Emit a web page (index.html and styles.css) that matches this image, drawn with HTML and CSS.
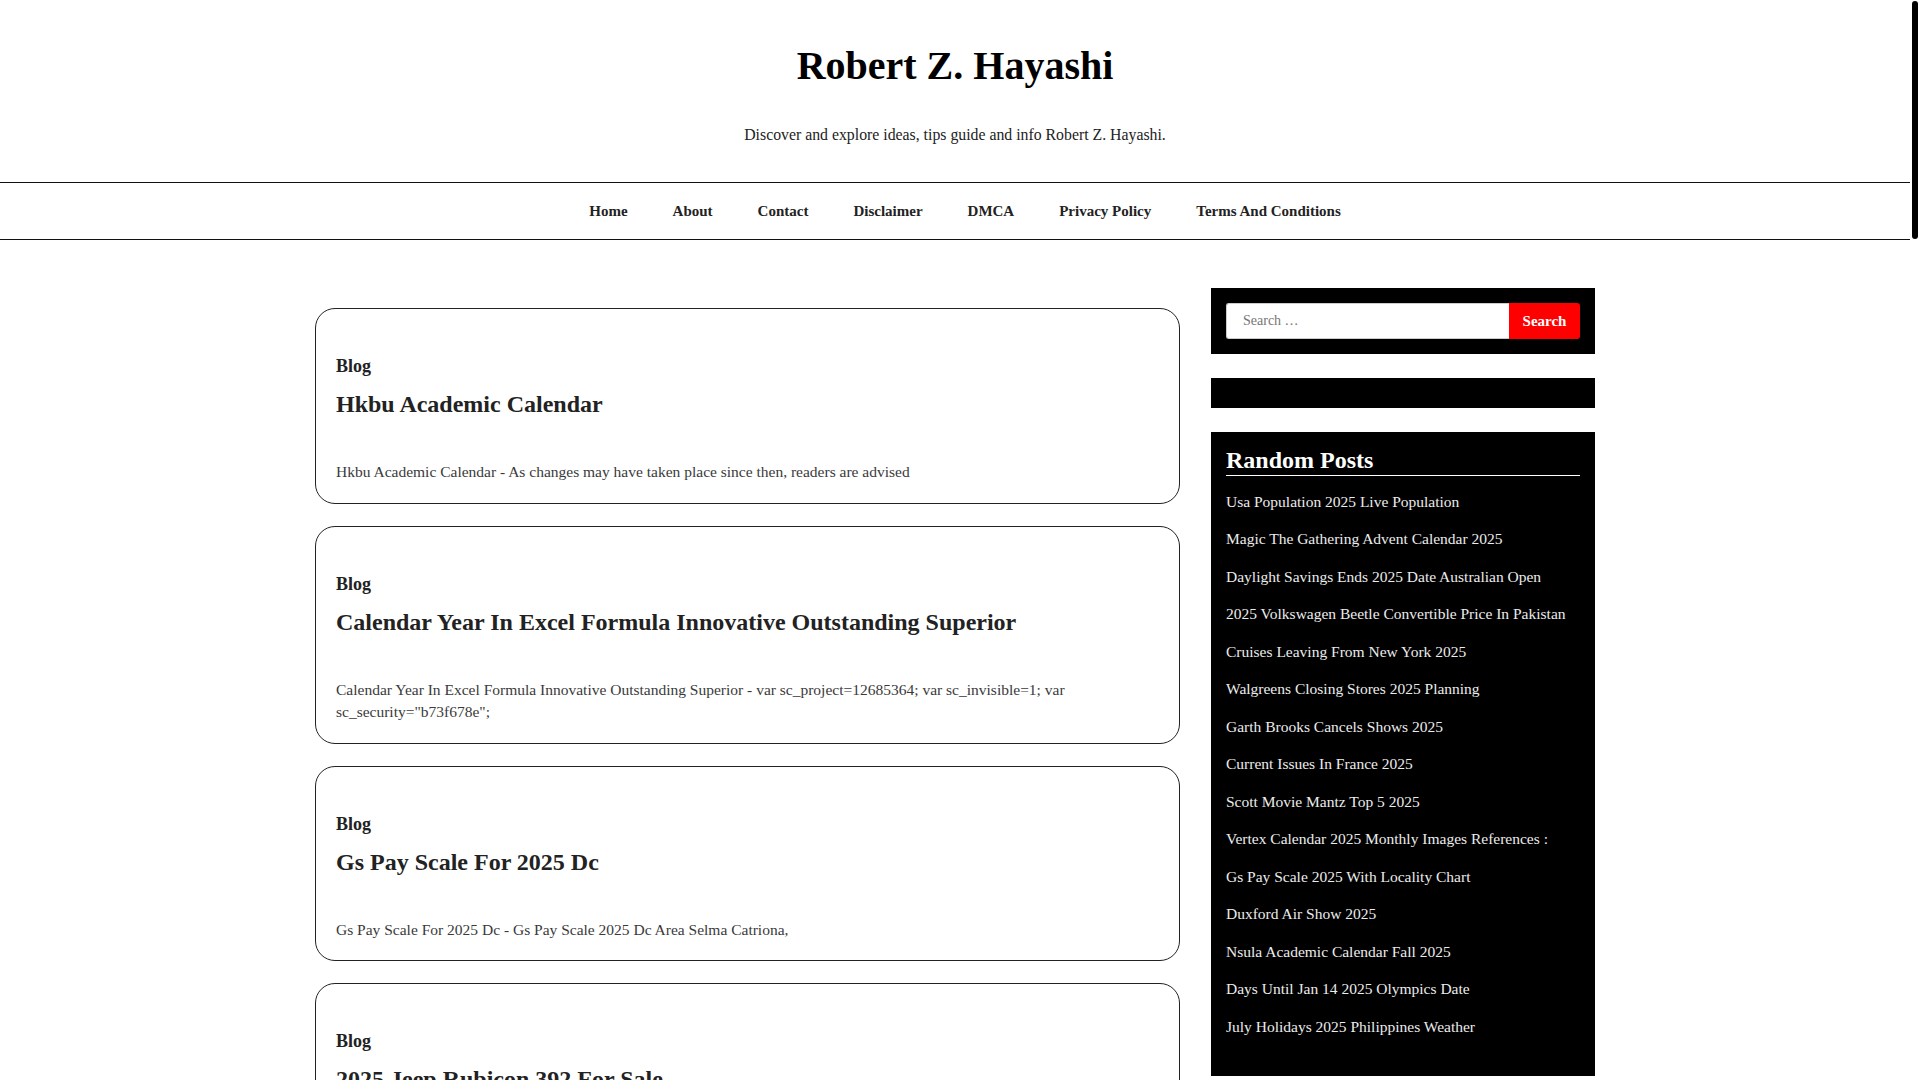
FILE: index.html
```html
<!DOCTYPE html>
<html lang="en">
<head>
<meta charset="utf-8">
<title>Robert Z. Hayashi</title>
<link rel="stylesheet" href="styles.css">
</head>
<body>
<div class="page">
  <header class="site-header">
    <h1 class="site-title">Robert Z. Hayashi</h1>
    <p class="site-tagline">Discover and explore ideas, tips guide and info Robert Z. Hayashi.</p>
  </header>
  <nav class="main-nav">
    <ul class="nav-list">
      <li><a href="#">Home</a></li>
      <li><a href="#">About</a></li>
      <li><a href="#">Contact</a></li>
      <li><a href="#">Disclaimer</a></li>
      <li><a href="#">DMCA</a></li>
      <li><a href="#">Privacy Policy</a></li>
      <li><a href="#">Terms And Conditions</a></li>
    </ul>
  </nav>
  <div class="layout">
    <main class="posts">
      <article class="card">
        <div class="card-cat">Blog</div>
        <h2 class="card-title">Hkbu Academic Calendar</h2>
        <p class="card-excerpt">Hkbu Academic Calendar - As changes may have taken place since then, readers are advised</p>
      </article>
      <article class="card">
        <div class="card-cat">Blog</div>
        <h2 class="card-title">Calendar Year In Excel Formula Innovative Outstanding Superior</h2>
        <p class="card-excerpt">Calendar Year In Excel Formula Innovative Outstanding Superior - var sc_project=12685364; var sc_invisible=1; var sc_security="b73f678e";</p>
      </article>
      <article class="card">
        <div class="card-cat">Blog</div>
        <h2 class="card-title">Gs Pay Scale For 2025 Dc</h2>
        <p class="card-excerpt">Gs Pay Scale For 2025 Dc - Gs Pay Scale 2025 Dc Area Selma Catriona,</p>
      </article>
      <article class="card">
        <div class="card-cat">Blog</div>
        <h2 class="card-title">2025 Jeep Rubicon 392 For Sale</h2>
        <p class="card-excerpt">2025 Jeep Rubicon 392 For Sale - 2025 Jeep Wrangler Rubicon 392 For Sale,</p>
      </article>
    </main>
    <aside class="sidebar">
      <section class="widget widget-search">
        <form class="search-form">
          <input class="search-field" type="search" placeholder="Search …">
          <button class="search-submit" type="button">Search</button>
        </form>
      </section>
      <section class="widget widget-empty"></section>
      <section class="widget widget-posts">
        <h2 class="widget-title">Random Posts</h2>
        <ul class="post-list">
          <li><a href="#">Usa Population 2025 Live Population</a></li>
          <li><a href="#">Magic The Gathering Advent Calendar 2025</a></li>
          <li><a href="#">Daylight Savings Ends 2025 Date Australian Open</a></li>
          <li><a href="#">2025 Volkswagen Beetle Convertible Price In Pakistan</a></li>
          <li><a href="#">Cruises Leaving From New York 2025</a></li>
          <li><a href="#">Walgreens Closing Stores 2025 Planning</a></li>
          <li><a href="#">Garth Brooks Cancels Shows 2025</a></li>
          <li><a href="#">Current Issues In France 2025</a></li>
          <li><a href="#">Scott Movie Mantz Top 5 2025</a></li>
          <li><a href="#">Vertex Calendar 2025 Monthly Images References :</a></li>
          <li><a href="#">Gs Pay Scale 2025 With Locality Chart</a></li>
          <li><a href="#">Duxford Air Show 2025</a></li>
          <li><a href="#">Nsula Academic Calendar Fall 2025</a></li>
          <li><a href="#">Days Until Jan 14 2025 Olympics Date</a></li>
          <li><a href="#">July Holidays 2025 Philippines Weather</a></li>
        </ul>
      </section>
    </aside>
  </div>
</div>
<div class="scrollbar" aria-hidden="true"><div class="scrollbar-thumb"></div></div>
</body>
</html>
```
FILE: styles.css
```css
body {
  margin: 0;
  background: #fff;
  color: #222;
  font-family: "Liberation Serif", "Times New Roman", serif;
  font-size: 16px;
}
a {
  color: inherit;
  text-decoration: none;
}
.page {
  margin-right: 10px;
}
.scrollbar {
  position: fixed;
  top: 0;
  right: 0;
  width: 10px;
  height: 100vh;
  background: #fff;
}
.scrollbar-thumb {
  margin: 1px 0 0 2px;
  width: 6px;
  height: 238px;
  border-radius: 3px;
  background: #000;
}
.site-header {
  text-align: center;
  padding: 42px 20px 35px;
}
.site-title {
  margin: 0;
  font-size: 40px;
  line-height: 48px;
  font-weight: 700;
  color: #000;
}
.site-tagline {
  margin: 33px 0 0;
  font-size: 15.8px;
  line-height: 24px;
  color: #222;
}
.main-nav {
  border-top: 1px solid #111;
  border-bottom: 1px solid #111;
  height: 56px;
  display: flex;
  align-items: center;
  justify-content: center;
}
.nav-list {
  list-style: none;
  margin: 0;
  padding: 0 0 0 20px;
  display: flex;
  gap: 45px;
  font-size: 15px;
  font-weight: 700;
  color: #222;
}
.layout {
  width: 1280px;
  margin: 48px auto 40px;
  display: grid;
  grid-template-columns: 865px 384px;
  column-gap: 31px;
  align-items: start;
}
.posts {
  padding-top: 20px;
  display: flex;
  flex-direction: column;
  gap: 22px;
}
.card {
  border: 1px solid #222;
  border-radius: 20px;
  padding: 44px 20px 19px;
}
.card-cat {
  font-size: 18px;
  line-height: 27px;
  font-weight: 700;
  color: #222;
}
.card-title {
  margin: 6px 0 0;
  font-size: 24px;
  line-height: 36px;
  font-weight: 700;
  color: #222;
}
.card-excerpt {
  margin: 39px 0 0;
  font-size: 15.5px;
  line-height: 22.5px;
  color: #3a3a3a;
}
.sidebar {
  display: flex;
  flex-direction: column;
  gap: 24px;
}
.widget {
  background: #000;
  padding: 15px;
}
.widget-empty {
  height: 0;
}
.search-form {
  display: flex;
  height: 36px;
}
.search-field {
  flex: 1;
  min-width: 0;
  margin: 0;
  border: 1px solid #ccc;
  border-right: 0;
  border-radius: 3px 0 0 3px;
  padding: 0 16px;
  font-family: "Liberation Serif", "Times New Roman", serif;
  font-size: 14px;
  color: #222;
  background: #fff;
  outline: none;
}
.search-field::placeholder {
  color: #767676;
}
.search-submit {
  width: 71px;
  margin: 0;
  border: 0;
  border-radius: 0 3px 3px 0;
  background: #ff0000;
  color: #fff;
  font-family: "Liberation Serif", "Times New Roman", serif;
  font-size: 15px;
  font-weight: 700;
  padding: 0;
}
.widget-posts {
  padding-bottom: 38px;
}
.widget-title {
  margin: 0;
  font-size: 24px;
  line-height: 27.6px;
  font-weight: 700;
  color: #fff;
  border-bottom: 1px solid #fff;
}
.post-list {
  list-style: none;
  margin: 0;
  padding: 0;
}
.post-list li {
  margin-top: 15px;
  font-size: 15.5px;
  line-height: 22.5px;
  color: #ececec;
}
```
